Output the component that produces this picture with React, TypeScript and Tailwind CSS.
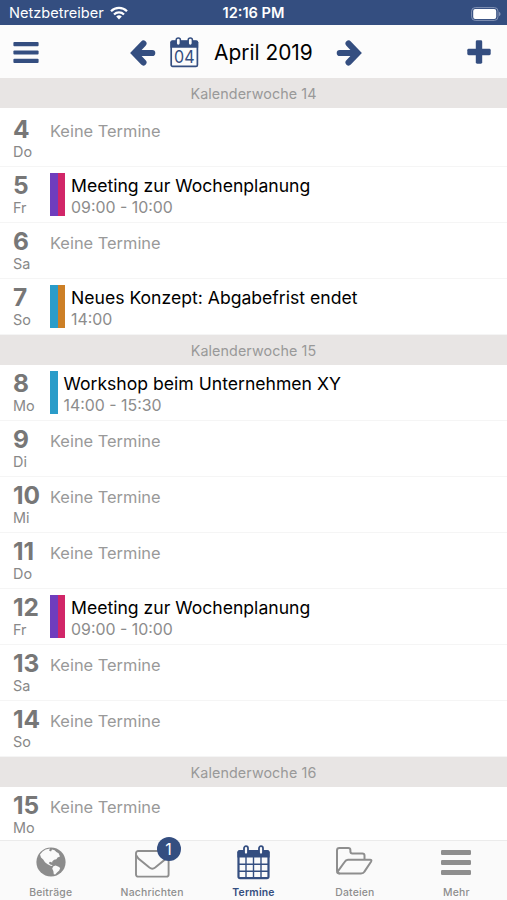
import type { ReactNode } from "react";

type Termin = { title: string; time: string; colors: string[] };
type Day = { day: number; name: string; termin?: Termin };

const meeting: Termin = {
  title: "Meeting zur Wochenplanung",
  time: "09:00 - 10:00",
  colors: ["bg-[#703dbd]", "bg-[#d12668]"],
};

const weeks: { week: number; days: Day[] }[] = [
  {
    week: 14,
    days: [
      { day: 4, name: "Do" },
      { day: 5, name: "Fr", termin: meeting },
      { day: 6, name: "Sa" },
      {
        day: 7,
        name: "So",
        termin: {
          title: "Neues Konzept: Abgabefrist endet",
          time: "14:00",
          colors: ["bg-[#2a9cc9]", "bg-[#cc7f26]"],
        },
      },
    ],
  },
  {
    week: 15,
    days: [
      {
        day: 8,
        name: "Mo",
        termin: {
          title: "Workshop beim Unternehmen XY",
          time: "14:00 - 15:30",
          colors: ["bg-[#2a9cc9]"],
        },
      },
      { day: 9, name: "Di" },
      { day: 10, name: "Mi" },
      { day: 11, name: "Do" },
      { day: 12, name: "Fr", termin: meeting },
      { day: 13, name: "Sa" },
      { day: 14, name: "So" },
    ],
  },
  { week: 16, days: [{ day: 15, name: "Mo" }] },
];

function WifiIcon() {
  return (
    <svg width="18" height="14" viewBox="0 0 18 14" fill="none" stroke="white" strokeWidth="2.2">
      <path d="M1 5.2a11.3 11.3 0 0 1 16 0" />
      <path d="M4 8.4a7 7 0 0 1 10 0" />
      <path d="M9 13.5 6.2 10.6a4 4 0 0 1 5.6 0Z" fill="white" stroke="none" />
    </svg>
  );
}

function BatteryIcon() {
  return (
    <svg width="30" height="14" viewBox="0 0 30 14" fill="none">
      <rect x="0.6" y="0.6" width="26.4" height="12.8" rx="3.6" stroke="#8494b6" strokeWidth="1" />
      <rect x="2.2" y="2" width="23" height="10" rx="2" fill="white" />
      <path d="M28 4.8q1.6.8 1.6 2.2T28 9.2z" fill="#8494b6" />
    </svg>
  );
}

function MenuIcon({ className }: { className: string }) {
  return (
    <svg viewBox="0 0 30 25" fill="currentColor" className={className}>
      <rect width="30" height="5" rx="1.2" />
      <rect y="10" width="30" height="5" rx="1.2" />
      <rect y="20" width="30" height="5" rx="1.2" />
    </svg>
  );
}

function ArrowIcon({ className = "" }: { className?: string }) {
  return (
    <svg
      width="26"
      height="26"
      viewBox="0 0 26 26"
      fill="none"
      stroke="currentColor"
      strokeWidth="6.2"
      strokeLinejoin="round"
      strokeLinecap="round"
      className={className}
    >
      <path d="M13.4 3.6 4.4 13l9 9.4" strokeLinejoin="miter" />
      <path d="M6 13h16.2" />
    </svg>
  );
}

function MonthIcon() {
  return (
    <svg width="29" height="31" viewBox="0 0 29 31" fill="none" stroke="currentColor">
      <rect x="1.2" y="4.2" width="26.2" height="25.2" rx="1.4" strokeWidth="1.7" />
      <path d="M.4 5.2q0-1.5 1.5-1.5h24.8q1.5 0 1.5 1.5v5.6H.4z" fill="currentColor" stroke="none" />
      <rect x="6.2" y="1" width="4.2" height="7.4" rx="2.1" fill="#fcfcfc" strokeWidth="1.5" />
      <rect x="18.2" y="1" width="4.2" height="7.4" rx="2.1" fill="#fcfcfc" strokeWidth="1.5" />
      <text
        x="14.3"
        y="26.2"
        textAnchor="middle"
        fontSize="17.5"
        textLength="20.5"
        lengthAdjust="spacingAndGlyphs"
        fill="currentColor"
        stroke="none"
        fontFamily="Inter, sans-serif"
      >
        04
      </text>
    </svg>
  );
}

function GlobeIcon() {
  return (
    <svg width="30" height="30" viewBox="0 0 30 30" fill="#8c8c8c" className="mb-[2px]">
      <circle cx="15" cy="15" r="14.6" />
      <path
        d="M4 7.4 6.6 4.4 9.6 2.6 14 1.6 13 3.6 15 4.6 16 2.6 18.6 3.2 20.4 5 22.6 6.2 24 9.6 21.6 10.6 20.4 12.2 18.2 12.8 16.4 14.2 16.2 15.6 14 14.8 12.8 16 14.2 17.6 16 18 16.6 19 14.6 18.8 11.6 17.2 9 15.2 7.2 12.4 5 10.6z"
        fill="#fafafa"
      />
      <path d="m17.4 19.2 2.2-.8 3 1.4 1.6 1.2-1 2.6-2.2 2-1.8 2-1.4-.4-.4-3-1.2-2.6z" fill="#fafafa" />
    </svg>
  );
}

function MailIcon() {
  return (
    <svg width="35" height="28" viewBox="0 0 35 28" fill="none" stroke="currentColor" strokeWidth="1.9" className="mt-px">
      <rect x="1" y="1" width="32.6" height="25.6" rx="2.2" />
      <path d="M1.2 5.4 3.4 8.6 14.4 17.6q2.9 2.2 5.8 0L31.2 8.6 33.4 5.4" />
    </svg>
  );
}

function CalendarIcon() {
  return (
    <svg width="33" height="35" viewBox="0 0 33 35" fill="none" stroke="currentColor" className="mb-px">
      <rect x="1.5" y="6" width="30" height="27.2" rx="1.6" strokeWidth="2.2" />
      <path d="M.4 7.2q0-2 2-2h28.2q2 0 2 2V12.6H.4z" fill="currentColor" stroke="none" />
      <path d="M9 12v21M16.5 12v21M24 12v21M1.5 19.2h30M1.5 26.2h30" strokeWidth="1.4" />
      <rect x="7" y="1.2" width="4" height="8.4" rx="2" fill="#fafafa" strokeWidth="1.8" />
      <rect x="22" y="1.2" width="4" height="8.4" rx="2" fill="#fafafa" strokeWidth="1.8" />
    </svg>
  );
}

function FolderIcon() {
  return (
    <svg
      width="37"
      height="28"
      viewBox="0 0 37 28"
      fill="none"
      stroke="currentColor"
      strokeWidth="2"
      strokeLinejoin="round"
      className="mb-[4px]"
    >
      <path d="M28.5 12.4V8.6q0-2.2-2.2-2.2H16.4q-2 0-2-2V3.2Q14.4 1 12.2 1H3.4Q1 1 1 3.4v20.2Q1 26.4 3.8 26.4" />
      <path d="M12 12.8h22q2.2 0 1 2l-6.4 9.6q-1.2 2-3.6 2H3q-2.6 0-1-2.2l6.6-9.2q1.2-2.2 3.4-2.2z" />
    </svg>
  );
}

function WeekBar({ week }: { week: number }) {
  return (
    <div className="flex h-[30px] shrink-0 items-center justify-center bg-[#e8e5e4] pt-[2px] text-[14.3px] tracking-[0.1px] text-[#999]">
      Kalenderwoche {week}
    </div>
  );
}

function DayRow({ day, name, termin }: Day) {
  return (
    <div className="flex h-[56px] shrink-0 border-b border-[#f5f5f5] pl-[13px]">
      <div className="w-[37px] shrink-0 pt-[5px] text-[#777]">
        <div className="text-[24.5px] leading-[27px] font-bold">{day}</div>
        <div className="text-[14.4px] leading-[18px] text-[#888]">{name}</div>
      </div>
      {termin ? (
        <div className="flex pt-[6px]">
          <div className="flex h-[43px]">
            {termin.colors.map((color) => (
              <div key={color} className={`w-[7.5px] ${color}`} />
            ))}
          </div>
          <div className="pl-[6px] whitespace-nowrap">
            <div className="text-[17.6px] leading-[25px] text-black">{termin.title}</div>
            <div className="text-[15.9px] leading-[19px] text-[#8c8c8c]">{termin.time}</div>
          </div>
        </div>
      ) : (
        <div className="pt-[8.4px] text-[16.4px] leading-[24px] text-[#999]">Keine Termine</div>
      )}
    </div>
  );
}

function Tab({ icon, label, active, badge }: { icon: ReactNode; label: string; active?: boolean; badge?: number }) {
  return (
    <div className={`flex flex-1 flex-col items-center ${active ? "font-semibold text-[#344e80]" : "font-medium text-[#8e8e8e]"}`}>
      <div className="relative flex h-[44px] shrink-0 items-center">
        {icon}
        {badge && (
          <div className="absolute -top-[4px] left-[22px] flex h-[24px] w-[24px] items-center justify-center rounded-full bg-[#344e80] text-[16px] font-normal text-white">
            {badge}
          </div>
        )}
      </div>
      <div className="text-[10.4px] leading-[15px] tracking-[0.2px]">{label}</div>
    </div>
  );
}

export default function App() {
  return (
    <div className="flex h-[900px] w-[507px] flex-col overflow-hidden bg-white font-['Inter',sans-serif]">
      {/* Status bar */}
      <div className="grid h-[25px] shrink-0 grid-cols-3 items-center bg-[#344e80] pt-[2px] text-[14.6px] text-white">
        <div className="flex items-center gap-[6px] pl-[9px]">
          Netzbetreiber
          <WifiIcon />
        </div>
        <div className="text-center font-semibold">12:16 PM</div>
        <div className="flex justify-end pr-[6px]">
          <BatteryIcon />
        </div>
      </div>

      {/* Header */}
      <div className="flex h-[53px] shrink-0 items-center bg-[#fcfcfc] pt-[2px] text-[#344e80]">
        <MenuIcon className="ml-[13px] h-[21px] w-[26px]" />
        <ArrowIcon className="ml-[91px]" />
        <div className="mb-px ml-[14px]">
          <MonthIcon />
        </div>
        <div className="ml-[15px] w-[100px] text-[20.9px] whitespace-nowrap text-black">April 2019</div>
        <ArrowIcon className="ml-[22px] rotate-180" />
        <svg width="24" height="24" viewBox="0 0 24 24" fill="currentColor" className="mb-[2px] ml-[105px]">
          <rect x="0.3" y="8.8" width="23.4" height="6.4" rx="1.4" />
          <rect x="8.8" y="0.3" width="6.4" height="23.4" rx="1.4" />
        </svg>
      </div>

      {/* Termine */}
      <div className="flex min-h-0 flex-1 flex-col overflow-hidden">
        {weeks.map(({ week, days }, i) => (
          <div key={week} className="shrink-0">
            <WeekBar week={week} />
            {i === 0 && <div className="h-[3px]" />}
            {days.map((d) => (
              <DayRow key={d.day} {...d} />
            ))}
          </div>
        ))}
      </div>

      {/* Tabs */}
      <div className="flex h-[60px] shrink-0 border-t border-[#ebebeb] bg-[#fafafa]">
        <Tab icon={<GlobeIcon />} label="Beiträge" />
        <Tab icon={<MailIcon />} label="Nachrichten" badge={1} />
        <Tab icon={<CalendarIcon />} label="Termine" active />
        <Tab icon={<FolderIcon />} label="Dateien" />
        <Tab icon={<MenuIcon className="mb-[2px] h-[25px] w-[30px]" />} label="Mehr" />
      </div>
    </div>
  );
}
